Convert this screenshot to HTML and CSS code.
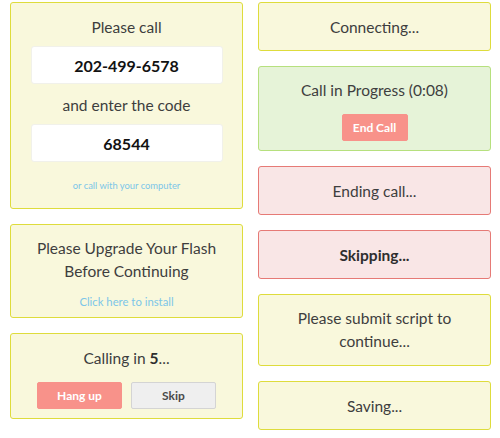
FILE: index.html
```html
<!DOCTYPE html>
<html>
<head>
<meta charset="utf-8">
<link rel="stylesheet" href="styles.css">
</head>
<body>
<div class="page">
  <div class="col">
    <div class="box yellow call-box">
      <div class="msg">Please call</div>
      <div class="field">202-499-6578</div>
      <div class="msg mid">and enter the code</div>
      <div class="field">68544</div>
      <a class="link small">or call with your computer</a>
    </div>
    <div class="box yellow flash-box">
      <div class="msg two">Please Upgrade Your Flash<br>Before Continuing</div>
      <a class="link install">Click here to install</a>
    </div>
    <div class="box yellow calling-box">
      <div class="msg">Calling in <b>5</b>...</div>
      <div class="btns">
        <button class="btn red">Hang up</button>
        <button class="btn grey">Skip</button>
      </div>
    </div>
  </div>
  <div class="col">
    <div class="box yellow simple">
      <div class="msg">Connecting...</div>
    </div>
    <div class="box green progress-box">
      <div class="msg">Call in Progress (0:08)</div>
      <button class="btn red end">End Call</button>
    </div>
    <div class="box red-box simple">
      <div class="msg">Ending call...</div>
    </div>
    <div class="box red-box simple">
      <div class="msg"><b>Skipping...</b></div>
    </div>
    <div class="box yellow submit-box">
      <div class="msg two">Please submit script to<br>continue...</div>
    </div>
    <div class="box yellow simple">
      <div class="msg">Saving...</div>
    </div>
  </div>
</div>
</body>
</html>
```

FILE: styles.css
```css
* { box-sizing: border-box; }
html, body { margin: 0; padding: 0; background: #fff; }
body {
  font-family: Lato, "Open Sans", sans-serif;
  color: #3e3e3e;
}
.page {
  display: grid;
  grid-template-columns: 233px 233px;
  column-gap: 15px;
  padding: 2px 9px 0 10px;
  align-items: start;
}
.col {
  display: flex;
  flex-direction: column;
  gap: 15px;
}
.box {
  border: 1px solid;
  border-radius: 3px;
  text-align: center;
  display: flex;
  flex-direction: column;
  align-items: center;
}
.yellow { background: #f9f8dc; border-color: #dedc3c; }
.green { background: #e6f3d8; border-color: #b6e07e; }
.red-box { background: #f9e6e6; border-color: #e67a76; }

.msg {
  font-size: 15.5px;
  line-height: 24px;
  color: #3e3e3e;
}
.msg b { color: #2e2e2e; }
.msg.two { line-height: 23px; }

.simple { padding: 12px 10px 11px; }

.call-box { padding: 12px 10px 15px; }
.field {
  width: 192px;
  height: 38px;
  margin-top: 7px;
  background: #fff;
  border: 1px solid #f1f1ea;
  border-radius: 3px;
  font-weight: bold;
  font-size: 16px;
  color: #121212;
  display: flex;
  align-items: center;
  justify-content: center;
}
.msg.mid { margin-top: 9px; }
.link { color: #7cc6e8; text-decoration: none; }
.link.small { font-size: 9.4px; line-height: 14px; margin-top: 17px; }

.flash-box { padding: 12px 16px 6px; }
.link.install { font-size: 11.3px; line-height: 18px; margin-top: 10px; }

.calling-box { padding: 12px 10px 9px; }
.btns { display: flex; gap: 9px; margin-top: 12px; }
.btn {
  font-family: Lato, "Open Sans", sans-serif;
  height: 27px;
  border-radius: 2px;
  font-size: 12px;
  cursor: pointer;
  padding: 0;
}
.btns .btn { width: 85px; }
.btn.red {
  background: #f8928a;
  border: 1px solid #f8928a;
  color: #fff;
  font-weight: bold;
}
.btn.grey {
  background: #efefef;
  border: 1px solid #d4d4d4;
  color: #4a4a4a;
  font-weight: bold;
}
.progress-box { padding: 11px 10px 9px; }
.btn.end { width: 66px; margin-top: 12px; }
.submit-box { padding: 12px 10px 12px; }
```
